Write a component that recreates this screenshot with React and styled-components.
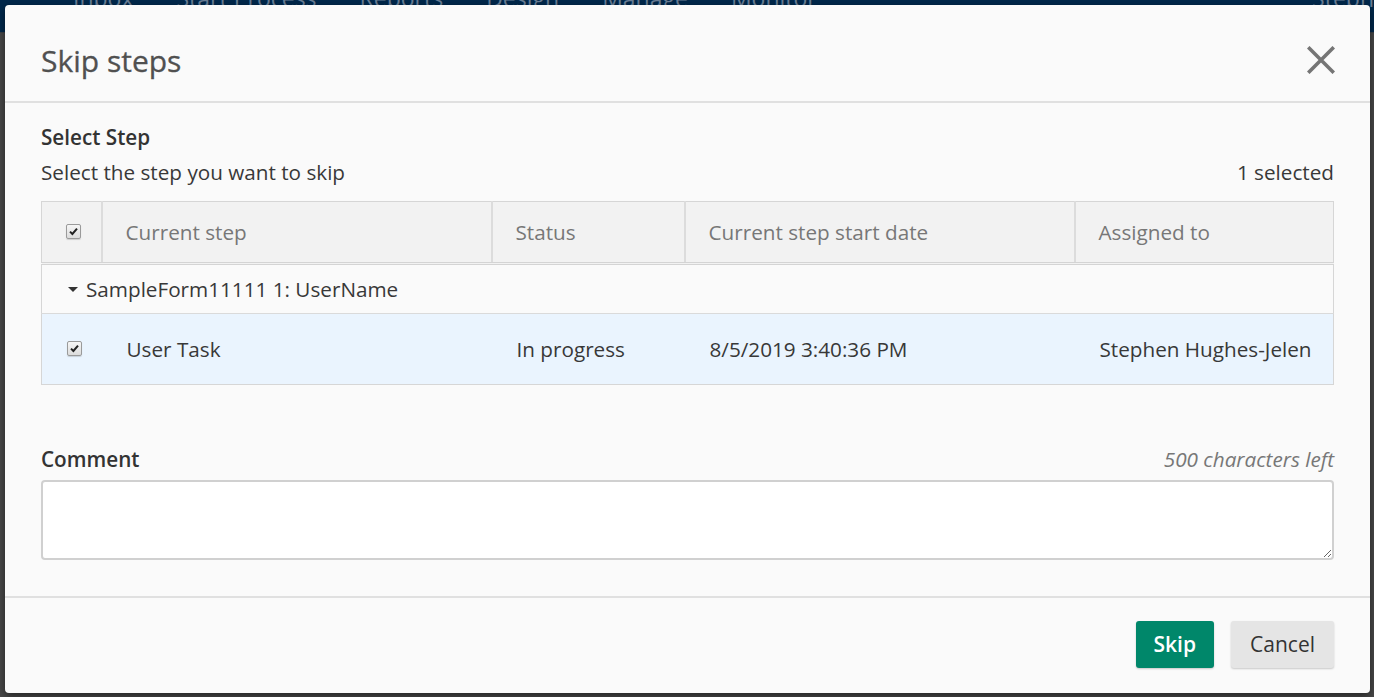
import React from "react";
import styled, { createGlobalStyle } from "styled-components";

const GlobalStyle = createGlobalStyle`
  html, body {
    margin: 0;
    padding: 0;
    height: 100%;
    overflow: hidden;
    font-family: "Open Sans", "Noto Sans", sans-serif;
  }
`;

const Page = styled.div`
  position: relative;
  width: 1374px;
  height: 697px;
  background: #4a4a4a;
  overflow: hidden;
`;

const NavBar = styled.div`
  height: 32px;
  background: #00284b;
  display: flex;
  align-items: flex-start;
  padding-left: 73px;
  gap: 43px;
  border-bottom: 1px solid #3a3f46;
`;

const NavItem = styled.span`
  font-size: 23px;
  line-height: 1;
  margin-top: -13px;
  color: #6b7f96;
  white-space: nowrap;
  margin-left: ${(p) => (p.push ? "auto" : "0")};
`;

const Backdrop = styled.div`
  height: 664px;
  background: #484848;
`;

const Modal = styled.div`
  position: absolute;
  left: 5px;
  top: 5px;
  width: 1365px;
  height: 688px;
  background: #fafafa;
  border-radius: 4px;
  box-shadow: 0 3px 9px rgba(0, 0, 0, 0.5);
  display: flex;
  flex-direction: column;
  font-size: 20.7px;
`;

const Header = styled.div`
  box-sizing: border-box;
  flex: 0 0 98px;
  display: flex;
  align-items: center;
  justify-content: space-between;
  padding: 14px 36px 0;
  border-bottom: 2px solid #e0e0e0;
`;

const Title = styled.h2`
  margin: 0;
  font-size: 30px;
  font-weight: 400;
  color: #505050;
  -webkit-text-stroke: 0.3px #505050;
`;

const CloseButton = styled.button`
  border: 0;
  background: none;
  padding: 0;
  width: 28px;
  height: 28px;
  cursor: pointer;
  margin-right: -1px;
`;

const Body = styled.div`
  flex: 1;
  padding: 20px 36px 0;
  color: #333;
`;

const SectionTitle = styled.div`
  font-weight: 600;
  line-height: 28px;
  color: #333;
`;

const SubRow = styled.div`
  display: flex;
  justify-content: space-between;
  align-items: baseline;
  line-height: 28px;
  margin-top: 7px;
  color: #383838;
`;

const Table = styled.table`
  width: 100%;
  margin-top: 15px;
  border-collapse: collapse;
  border: 1px solid #d6d6d6;
  table-layout: fixed;
`;

const Th = styled.th`
  box-sizing: border-box;
  height: 62px;
  background: #f2f2f2;
  color: #777;
  font-weight: 400;
  text-align: ${(p) => (p.center ? "center" : "left")};
  padding: 0 0 0 ${(p) => (p.center ? "5px" : "23px")};
  border-left: ${(p) => (p.first ? "none" : "2px solid #dcdcdc")};
  border-bottom: 3px double #d4d4d4;
  width: ${(p) => p.width || "auto"};
  white-space: nowrap;
`;

const GroupTd = styled.td`
  height: 48px;
  background: #fafafa;
  border-bottom: 1px solid #dadada;
  padding: 0 0 0 26px;
  color: #383838;
`;

const Caret = styled.span`
  display: inline-block;
  width: 0;
  height: 0;
  border-left: 5px solid transparent;
  border-right: 5px solid transparent;
  border-top: 5px solid #333;
  vertical-align: middle;
  margin-right: 8px;
  margin-bottom: 3px;
`;

const Tr = styled.tr`
  background: ${(p) => (p.selected ? "#eaf4fe" : "transparent")};
`;

const Td = styled.td`
  height: 70px;
  padding: 0 0 0 ${(p) => (p.center ? "5px" : "25px")};
  text-align: ${(p) => (p.center ? "center" : "left")};
  color: #383838;
  white-space: nowrap;
`;

const Box = styled.span`
  display: inline-block;
  width: 13px;
  height: 13px;
  border: 1px solid #9a9a9a;
  border-radius: 2px;
  background: linear-gradient(#f6f6f6, #dcdcdc);
  box-shadow: 0 1px 1px rgba(0, 0, 0, 0.15);
  position: relative;
  vertical-align: middle;
  margin-top: -5px;
  svg {
    position: absolute;
    left: 1px;
    top: 1px;
  }
`;

const CommentHead = styled.div`
  display: flex;
  justify-content: space-between;
  align-items: baseline;
  line-height: 28px;
  margin-top: 60px;
`;

const Label = styled.label`
  font-weight: 600;
  color: #333;
`;

const Counter = styled.span`
  font-style: italic;
  color: #777;
`;

const TextArea = styled.textarea`
  display: block;
  box-sizing: border-box;
  width: 100%;
  height: 80px;
  margin-top: 7px;
  border: 2px solid #d0d0d0;
  border-radius: 4px;
  background: #fff;
  resize: vertical;
  font-family: inherit;
  font-size: 16px;
  outline: none;
`;

const Footer = styled.div`
  border-top: 2px solid #e0e0e0;
  display: flex;
  align-items: center;
  justify-content: flex-end;
  gap: 17px;
  padding: 0 36px 3px;
  box-sizing: border-box;
  flex: 0 0 97px;
`;

const Button = styled.button`
  height: 47px;
  border: 0;
  border-radius: 3px;
  font-family: inherit;
  font-size: 21px;
  font-weight: ${(p) => (p.primary ? 600 : 400)};
  padding: 0 ${(p) => (p.primary ? "18px" : "19px")};
  color: ${(p) => (p.primary ? "#fff" : "#333")};
  background: ${(p) => (p.primary ? "#00876a" : "#e5e5e5")};
  box-shadow: 0 1px 2px rgba(0, 0, 0, 0.2);
  cursor: pointer;
`;

const Check = () => (
  <Box>
    <svg width="11" height="11" viewBox="0 0 11 11">
      <path d="M2 5.6 L4.4 8 L9 2.6" fill="none" stroke="#222" strokeWidth="2" />
    </svg>
  </Box>
);

const navItems = ["Inbox", "Start Process", "Reports", "Design", "Manage", "Monitor"];

const App = () => (
  <Page>
    <GlobalStyle />
    <NavBar>
      {navItems.map((n) => (
        <NavItem key={n}>{n}</NavItem>
      ))}
      <NavItem push>Steph</NavItem>
    </NavBar>
    <Backdrop />
    <Modal>
      <Header>
        <Title>Skip steps</Title>
        <CloseButton aria-label="Close">
          <svg width="28" height="28" viewBox="0 0 28 28">
            <path d="M2.5 2.5 L25.5 25.5 M25.5 2.5 L2.5 25.5" stroke="#757575" strokeWidth="3.6" strokeLinecap="square" />
          </svg>
        </CloseButton>
      </Header>
      <Body>
        <SectionTitle>Select Step</SectionTitle>
        <SubRow>
          <span>Select the step you want to skip</span>
          <span>1 selected</span>
        </SubRow>
        <Table>
          <thead>
            <tr>
              <Th first center width="60px"><Check /></Th>
              <Th width="390px">Current step</Th>
              <Th width="193px">Status</Th>
              <Th width="390px">Current step start date</Th>
              <Th>Assigned to</Th>
            </tr>
          </thead>
          <tbody>
            <tr>
              <GroupTd colSpan={5}>
                <Caret />SampleForm11111 1: UserName
              </GroupTd>
            </tr>
            <Tr selected>
              <Td center><Check /></Td>
              <Td>User Task</Td>
              <Td>In progress</Td>
              <Td>8/5/2019 3:40:36 PM</Td>
              <Td>Stephen Hughes-Jelen</Td>
            </Tr>
          </tbody>
        </Table>
        <CommentHead>
          <Label>Comment</Label>
          <Counter>500 characters left</Counter>
        </CommentHead>
        <TextArea />
      </Body>
      <Footer>
        <Button primary>Skip</Button>
        <Button>Cancel</Button>
      </Footer>
    </Modal>
  </Page>
);

export default App;
